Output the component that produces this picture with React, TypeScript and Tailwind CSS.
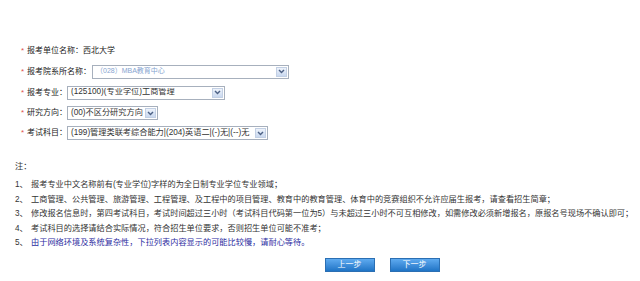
import React from "react";

const FONT = { fontFamily: '"Liberation Sans", "Noto Sans CJK SC", sans-serif' };

function Arrow() {
  return (
    <div className="w-[11px] h-full border border-[#c3d0e4] bg-gradient-to-b from-[#eef3fb] to-[#c9d8ef] flex items-center justify-center shrink-0">
      <svg width="7" height="5" viewBox="0 0 7 5">
        <path d="M1 1 L3.5 3.6 L6 1" fill="none" stroke="#4d6185" strokeWidth="1.4" />
      </svg>
    </div>
  );
}

function Select({ w, text, light }: { w: string; text: string; light?: boolean }) {
  return (
    <div className={`${w} h-[14px] border border-[#a7b0bd] bg-white flex items-stretch p-[1px]`}>
      <div
        className={`flex-1 min-w-0 flex items-center pl-[2px] whitespace-nowrap overflow-hidden ${
          light ? "text-[7px] text-[#86a4d0]" : "text-[8.2px] text-[#333]"
        }`}
      >
        {text}
      </div>
      <Arrow />
    </div>
  );
}

function Label({ w, children }: { w: string; children: React.ReactNode }) {
  return (
    <div className={`${w} shrink-0 flex items-center whitespace-nowrap text-[8px] text-[#222]`}>
      <span className="inline-block text-[#e05050] w-[6px] text-[8px]">*</span>
      {children}
    </div>
  );
}

export default function App() {
  return (
    <div className="w-[640px] h-[281px] bg-white overflow-hidden" style={FONT}>
      <div className="pt-[41px] pl-[21px] flex flex-col">
        <div className="h-[20px] flex items-center">
          <Label w="w-[120px]">报考单位名称：西北大学</Label>
        </div>
        <div className="h-[21px] flex items-center">
          <Label w="w-[71px]">报考院系所名称：</Label>
          <Select w="w-[197px]" text="（028）MBA教育中心" light />
        </div>
        <div className="h-[21px] flex items-center">
          <Label w="w-[46px]">报考专业：</Label>
          <Select w="w-[158px]" text="(125100)(专业学位)工商管理" />
        </div>
        <div className="h-[20px] flex items-center">
          <Label w="w-[46px]">研究方向：</Label>
          <Select w="w-[91px]" text="(00)不区分研究方向" />
        </div>
        <div className="h-[20px] flex items-center">
          <Label w="w-[46px]">考试科目：</Label>
          <Select w="w-[201px]" text="(199)管理类联考综合能力|(204)英语二|(-)无|(--)无" />
        </div>
      </div>

      <div className="pl-[15px] mt-[17px] text-[8.2px] text-[#333] leading-[14.4px]">
        <div className="mb-[4px]">注：</div>
        <div className="flex"><span className="w-[16px]">1、</span>报考专业中文名称前有(专业学位)字样的为全日制专业学位专业领域；</div>
        <div className="flex"><span className="w-[16px]">2、</span>工商管理、公共管理、旅游管理、工程管理、及工程中的项目管理、教育中的教育管理、体育中的竞赛组织不允许应届生报考，请查看招生简章；</div>
        <div className="flex whitespace-nowrap"><span className="w-[16px]">3、</span>修改报名信息时，第四考试科目，考试时间超过三小时（考试科目代码第一位为5）与未超过三小时不可互相修改，如需修改必须新增报名，原报名号现场不确认即可；</div>
        <div className="flex"><span className="w-[16px]">4、</span>考试科目的选择请结合实际情况，符合招生单位要求，否则招生单位可能不准考；</div>
        <div className="flex text-[#2d2d9f]"><span className="w-[16px] text-[#333]">5、</span>由于网络环境及系统复杂性，下拉列表内容显示的可能比较慢，请耐心等待。</div>
      </div>

      <div className="flex justify-center gap-[15px] mt-[8px] pl-[124px] w-[640px]">
        <button className="w-[50px] h-[14px] bg-gradient-to-b from-[#5eaaf0] to-[#1e74c6] border border-[#2b6fb3] text-white text-[8px] leading-none flex items-center justify-center">
          上一步
        </button>
        <button className="w-[50px] h-[14px] bg-gradient-to-b from-[#5eaaf0] to-[#1e74c6] border border-[#2b6fb3] text-white text-[8px] leading-none flex items-center justify-center">
          下一步
        </button>
      </div>
    </div>
  );
}
